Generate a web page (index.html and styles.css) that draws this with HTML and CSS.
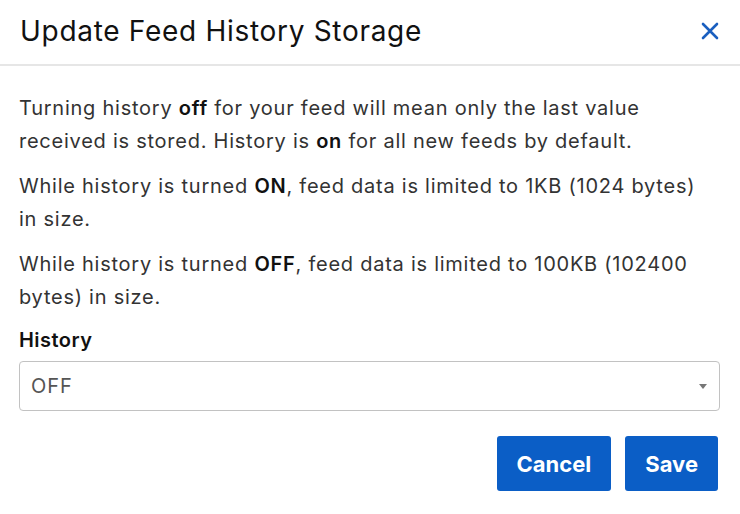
FILE: index.html
```html
<!DOCTYPE html>
<html>
<head>
<meta charset="utf-8">
<link rel="stylesheet" href="styles.css">
</head>
<body>
<div class="modal">
  <div class="modal-header">
    <h1 class="modal-title">Update Feed History Storage</h1>
    <button class="close" aria-label="Close">
      <svg width="18" height="18" viewBox="0 0 18 18"><path d="M2 2 L16 16 M16 2 L2 16" stroke="#1a5fbf" stroke-width="2.6" stroke-linecap="round"/></svg>
    </button>
  </div>
  <div class="modal-body">
    <p>Turning history <b>off</b> for your feed will mean only the last value received is stored. History is <b>on</b> for all new feeds by default.</p>
    <p>While history is turned <b>ON</b>, feed data is limited to 1KB (1024 bytes) in size.</p>
    <p>While history is turned <b>OFF</b>, feed data is limited to 100KB (102400 bytes) in size.</p>
    <label class="field-label">History</label>
    <div class="select">
      <span class="select-value">OFF</span>
      <span class="caret"></span>
    </div>
  </div>
  <div class="modal-footer">
    <button class="btn">Cancel</button>
    <button class="btn">Save</button>
  </div>
</div>
</body>
</html>
```
FILE: styles.css
```css
* { box-sizing: border-box; }
html, body { margin: 0; padding: 0; background: #fff; }
body { font-family: Inter, "Open Sans", "Liberation Sans", sans-serif; color: #333; }
.modal { width: 740px; }
.modal-header {
  height: 66px;
  display: flex;
  align-items: center;
  justify-content: space-between;
  padding: 0 21px 2px 20px;
  border-bottom: 2px solid #e6e6e6;
}
.modal-title {
  margin: 0;
  font-size: 28px;
  font-weight: 400;
  color: #111;
  letter-spacing: 0.7px;
}
.close {
  background: none;
  border: 0;
  padding: 0;
  width: 18px;
  height: 18px;
  display: flex;
  cursor: pointer;
}
.modal-body { padding: 26px 20px 0 19px; }
.modal-body p {
  margin: 0 0 12px 0;
  font-size: 20px;
  line-height: 33px;
  letter-spacing: 0.75px;
  color: #333;
  padding-right: 15px;
}
.modal-body p b { color: #111; font-weight: 600; }
.field-label {
  display: block;
  font-size: 20px;
  font-weight: 600;
  letter-spacing: 0.45px;
  color: #111;
  margin-top: 14px;
  line-height: 24px;
}
.select {
  margin-top: 9px;
  height: 50px;
  border: 1.5px solid #c2c2c2;
  border-radius: 4px;
  display: flex;
  align-items: center;
  justify-content: space-between;
  padding: 0 12px 0 11px;
}
.select-value { font-size: 20px; color: #555; letter-spacing: 1px; }
.caret {
  width: 0; height: 0;
  border-left: 4px solid transparent;
  border-right: 4px solid transparent;
  border-top: 5px solid #777;
}
.modal-footer {
  display: flex;
  justify-content: flex-end;
  gap: 14px;
  padding: 25px 22px 0 0;
}
.btn {
  height: 55px;
  background: #0b5ec6;
  color: #fff;
  border: 0;
  border-radius: 3px;
  font-family: Inter, "Open Sans", "Liberation Sans", sans-serif;
  font-size: 22px;
  font-weight: 700;
  padding: 0 20px;
}
```
